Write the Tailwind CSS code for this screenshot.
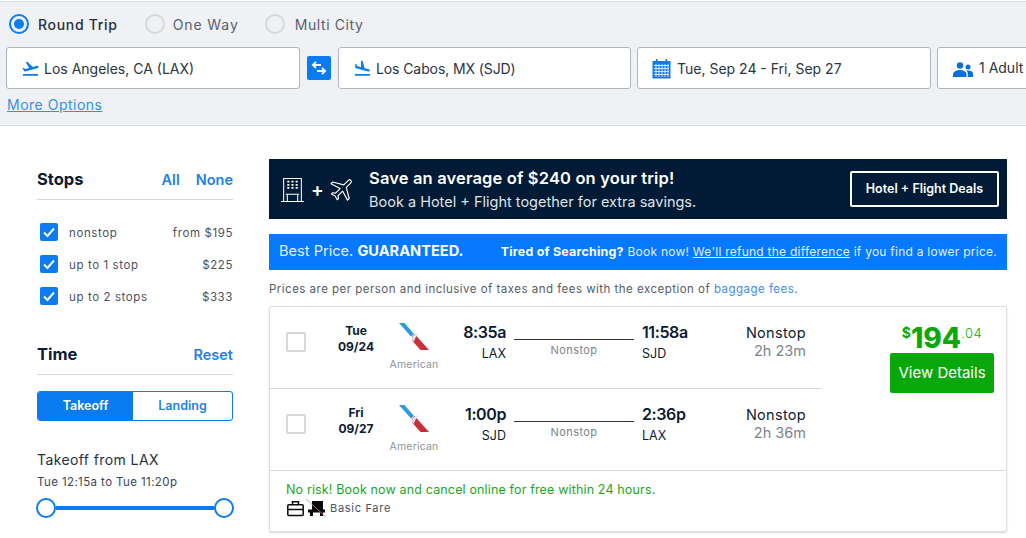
<!DOCTYPE html>
<html lang="en">
<head>
    <meta charset="UTF-8">
    <meta name="viewport" content="width=device-width, initial-scale=1.0">
    <title>Flight results</title>
    <script src="https://cdn.jsdelivr.net/npm/@tailwindcss/browser@4"></script>
</head>
<body class="bg-white font-['Inter',sans-serif] text-[#0b1b33] overflow-hidden h-[538px] w-[1026px]">
    <!-- search bar -->
    <header class="mt-px h-[125px] bg-[#eff1f4] border-y border-[#d9dce0] overflow-hidden">
        <div class="flex items-center h-[44px] pl-[9px] text-[14px]">
            <span class="w-5 h-5 rounded-full border-2 border-[#0a7bf0] flex items-center justify-center"><span class="w-2.5 h-2.5 rounded-full bg-[#0a7bf0]"></span></span>
            <span class="ml-[9px] font-medium text-[#26303f] tracking-[0.7px]">Round Trip</span>
            <span class="ml-[27px] w-5 h-5 rounded-full border-2 border-[#d5d8dc]"></span>
            <span class="ml-2 text-[#59616e] tracking-[0.9px]">One Way</span>
            <span class="ml-[26px] w-5 h-5 rounded-full border-2 border-[#d5d8dc]"></span>
            <span class="ml-[10px] text-[#59616e] tracking-[0.6px]">Multi City</span>
        </div>
        <div class="flex items-center pl-[6px] mt-px text-[14px] text-[#2b3442] whitespace-nowrap">
            <div class="w-[294px] h-[42px] shrink-0 bg-white border border-[#aeb5bd] rounded-[3px] flex items-center pl-[14px]">
                <svg class="w-[19px] h-[19px] text-[#0a7bf0]" viewBox="0 0 24 24" fill="currentColor"><path d="M2.5 19h19v2h-19zm19.57-9.36c-.21-.8-1.04-1.28-1.84-1.06L14.92 10l-6.9-6.43-1.93.51 4.14 7.17-4.97 1.33-1.97-1.54-1.45.39 1.82 3.16.77 1.33 1.6-.43 5.31-1.42 4.35-1.16L21 11.49c.81-.23 1.28-1.05 1.07-1.85z"/></svg>
                <span class="ml-[4px]">Los Angeles, CA (LAX)</span>
            </div>
            <div class="w-6 h-6 shrink-0 mx-[7px] bg-[#0a7bf0] rounded-[2px] flex items-center justify-center">
                <svg class="w-[18px] h-[18px]" viewBox="0 0 18 18" fill="none" stroke="white" stroke-width="1.8"><path d="M3 6h8M6 3 2.8 6 6 9"/><path d="M7 12h8M12 9l3.2 3-3.2 3"/></svg>
            </div>
            <div class="w-[293px] h-[42px] shrink-0 bg-white border border-[#aeb5bd] rounded-[3px] flex items-center pl-[14px]">
                <svg class="w-[19px] h-[19px] text-[#0a7bf0]" viewBox="0 0 24 24" fill="currentColor"><path d="M2.5 19h19v2h-19zm7.18-5.73l4.35 1.16 5.31 1.42c.8.21 1.62-.26 1.84-1.06.21-.8-.26-1.62-1.06-1.84l-5.31-1.42-2.76-9.02L10.12 2v8.28L5.15 8.95l-.93-2.32-1.45-.39v5.17l1.6.43 5.31 1.43z"/></svg>
                <span class="ml-[4px] tracking-[-0.1px]">Los Cabos, MX (SJD)</span>
            </div>
            <div class="w-[294px] h-[42px] shrink-0 ml-[6px] bg-white border border-[#aeb5bd] rounded-[3px] flex items-center pl-[14px]">
                <svg class="w-[19px] h-[21px]" viewBox="0 0 19 21"><rect x="0.5" y="3" width="18" height="17.5" fill="#0a7bf0"/><rect x="4" y="1" width="1.5" height="4" fill="#0a7bf0"/><rect x="13.5" y="1" width="1.5" height="4" fill="#0a7bf0"/><path d="M2 7.5h15M2 10.5h15M2 13.5h15M2 16.5h15M4 6v13M7 6v13M10 6v13M13 6v13M16 6v13" stroke="#cfe3fb" stroke-width="1"/></svg>
                <span class="ml-[6px]">Tue, Sep 24 - Fri, Sep 27</span>
            </div>
            <div class="w-[200px] h-[42px] shrink-0 ml-[6px] bg-white border border-[#aeb5bd] rounded-[3px] flex items-center pl-[15px]">
                <svg class="w-5 h-[15px] mt-[3px] text-[#0a6fdc]" viewBox="0 0 20 15" fill="currentColor"><circle cx="7" cy="3.5" r="3.2"/><path d="M0 15v-2.5C0 9.5 3.5 8 7 8s6.5 1.5 6.5 4.5V15z"/><circle cx="15" cy="5" r="2.5"/><path d="M14.8 15v-3c0-1.4-.5-2.5-1.5-3.4.6-.2 1.2-.2 1.9-.2 2.5 0 4.8 1.2 4.8 3.4V15z"/></svg>
                <span class="ml-[6px] -mt-[2px]">1 Adult</span>
            </div>
        </div>
        <a class="block ml-[7px] mt-[6px] text-[14px] leading-[20px] text-[#3a8ee6] underline tracking-[0.5px]">More Options</a>
    </header>

    <div class="flex items-start">
        <!-- filters -->
        <aside class="w-[196px] ml-[37px] shrink-0">
            <div class="flex items-center justify-between h-[41px] mt-[33px] pt-px border-b border-[#d5d8dc]">
                <h2 class="text-[16.5px] font-bold text-[#0b1b33]">Stops</h2>
                <div class="text-[14.5px] font-semibold text-[#1f80e8] flex gap-4"><span>All</span><span>None</span></div>
            </div>
            <ul class="mt-[18px] text-[11.5px] text-[#4a5260] tracking-[0.6px]">
                <li class="flex items-center h-[32px]">
                    <span class="ml-[3px] -mt-[4px] w-[18px] h-[18px] rounded-[2px] bg-[#0a7bf0] flex items-center justify-center"><svg class="w-3 h-3" viewBox="0 0 12 12" fill="none" stroke="white" stroke-width="2"><path d="M1 6.5 4.5 10 11 2.5"/></svg></span>
                    <span class="ml-[11px]">nonstop</span><span class="ml-auto">from $195</span>
                </li>
                <li class="flex items-center h-[32px]">
                    <span class="ml-[3px] -mt-[4px] w-[18px] h-[18px] rounded-[2px] bg-[#0a7bf0] flex items-center justify-center"><svg class="w-3 h-3" viewBox="0 0 12 12" fill="none" stroke="white" stroke-width="2"><path d="M1 6.5 4.5 10 11 2.5"/></svg></span>
                    <span class="ml-[11px]">up to 1 stop</span><span class="ml-auto">$225</span>
                </li>
                <li class="flex items-center h-[32px]">
                    <span class="ml-[3px] -mt-[4px] w-[18px] h-[18px] rounded-[2px] bg-[#0a7bf0] flex items-center justify-center"><svg class="w-3 h-3" viewBox="0 0 12 12" fill="none" stroke="white" stroke-width="2"><path d="M1 6.5 4.5 10 11 2.5"/></svg></span>
                    <span class="ml-[11px]">up to 2 stops</span><span class="ml-auto">$333</span>
                </li>
            </ul>
            <div class="flex items-center justify-between h-[40px] mt-[21px] border-b border-[#d5d8dc]">
                <h2 class="text-[16.5px] font-bold text-[#0b1b33]">Time</h2>
                <span class="text-[14.5px] font-semibold text-[#1f80e8]">Reset</span>
            </div>
            <div class="flex h-[30px] mt-[16px] border border-[#0a7bf0] rounded-[3px] overflow-hidden text-[12.5px] font-semibold">
                <span class="w-[95px] bg-[#0a7bf0] text-white flex items-center justify-center">Takeoff</span>
                <span class="flex-1 text-[#1f80e8] flex items-center justify-center">Landing</span>
            </div>
            <p class="mt-[29px] text-[14px] leading-[20px] text-[#26303f] tracking-[0.4px]">Takeoff from LAX</p>
            <p class="mt-[4px] text-[11.5px] leading-[16px] text-[#3d4654] tracking-[0.4px]">Tue 12:15a to Tue 11:20p</p>
            <div class="flex items-center mt-[8px] h-5 -ml-px">
                <span class="w-5 h-5 shrink-0 rounded-full bg-white border-2 border-[#0a7bf0]"></span>
                <span class="flex-1 h-[4px] bg-[#0a7bf0]"></span>
                <span class="w-5 h-5 shrink-0 rounded-full bg-white border-2 border-[#0a7bf0] -mr-px"></span>
            </div>
        </aside>

        <!-- results -->
        <main class="w-[738px] ml-[36px] mt-[33px] shrink-0">
            <section class="h-[60px] bg-[#011a35] flex items-center text-white">
                <svg class="ml-[11px] w-[25px] h-[25px]" viewBox="0 0 24 24" fill="none" stroke="white" stroke-width="1"><path d="M3.5 23V1.5h17V23M1 23.5h22M7 23v-6.5h10V23M5.5 16.5h13"/><path d="M7 4.5h2M11 4.5h2M15 4.5h2M7 7.5h2M11 7.5h2M15 7.5h2M7 10.5h2M11 10.5h2M15 10.5h2" stroke-width="1.6"/></svg>
                <span class="ml-[7px] w-[11px] h-[11px] flex items-center justify-center text-[19px] font-semibold leading-none">+</span>
                <svg class="ml-[6px] w-[28px] h-[28px]" viewBox="0 0 24 24" fill="none" stroke="white" stroke-width="1" stroke-linejoin="round"><path transform="rotate(45 12 12)" d="M21.5 16v-2L13 9V3.5c0-.83-.67-1.5-1.5-1.5S10 2.67 10 3.5V9l-8.5 5v2l8.5-2.5V19l-2 1.5V22l3.5-1 3.5 1v-1.5L13 19v-5.5z"/></svg>
                <div class="ml-[12px] mt-[2px] whitespace-nowrap">
                    <p class="text-[16.5px] leading-[20px] font-semibold tracking-[0.15px]">Save an average of $240 on your trip!</p>
                    <p class="mt-[3px] text-[14.5px] leading-[22px] text-[#dfe3e8]">Book a Hotel + Flight together for extra savings.</p>
                </div>
                <a class="ml-auto mr-2 w-[149px] h-[36px] border-2 border-white rounded-[2px] flex items-center justify-center text-[12.5px] font-semibold">Hotel + Flight Deals</a>
            </section>

            <section class="h-[36px] mt-[15px] bg-[#0579ff] text-white flex items-center whitespace-nowrap">
                <span class="ml-[10px] -mt-px text-[14.6px] text-[#e3effd]">Best Price. <b class="font-bold text-white">GUARANTEED.</b></span>
                <span class="ml-auto mr-[10px] text-[12px] text-[#e3effd] tracking-[0.25px]"><b class="text-[12.4px] font-bold text-white">Tired of Searching?</b> Book now! <u>We'll refund the difference</u> if you find a lower price.</span>
            </section>

            <p class="mt-[11px] text-[11.5px] leading-[16px] text-[#565c66] tracking-[0.48px] whitespace-nowrap">Prices are per person and inclusive of taxes and fees with the exception of <a class="text-[#3a8ee6]">baggage fees</a>.</p>

            <article class="h-[226px] mt-[9px] border border-[#dcdee1] shadow-[0_1px_2px_rgba(0,0,0,0.15)] rounded-[2px]">
                <div class="flex h-[164px] border-b border-[#d5d8dc]">
                    <div class="w-[552px] shrink-0">
                        <div class="flex h-[82px] border-b border-[#d5d8dc]">
                            <span class="ml-4 mt-[25px] w-5 h-5 shrink-0 border-2 border-[#d5d8dc] rounded-[2px]"></span>
                            <div class="ml-5 mt-[16px] w-[60px] text-center text-[12px] leading-[16px] font-bold">Tue<br>09/24</div>
                            <div class="mt-[15px] w-[56px] flex flex-col items-center">
                                <svg class="w-[30px] h-[30px]" viewBox="0 0 30 30"><path d="M0 1h5.5L15 12l-3 2.5z" fill="#2e9ad6"/><path d="M15.5 12 30 28h-8.5L13 18.5l.5-4z" fill="#c9303a"/><path d="M20 11c-2.5.3-4.5 1.5-6.5 3.5L13 18l2 2c.5-3.5 2.5-6.5 5-9z" fill="#e2e5e9"/></svg>
                                <span class="mt-[7px] text-[10.5px] leading-[12px] text-[#8d939c] tracking-[0.2px]">American</span>
                            </div>
                            <div class="w-[64px] mt-[15px] text-right">
                                <p class="text-[16px] leading-[20px] font-semibold tracking-[-0.4px]">8:35a</p>
                                <p class="mt-[4px] text-[12.5px] leading-[16px]">LAX</p>
                            </div>
                            <div class="ml-2 w-[120px] mt-[32px]">
                                <div class="h-px bg-[#2b3442]"></div>
                                <p class="mt-[4px] text-center text-[11px] leading-[12px] text-[#7d838c] tracking-[0.4px]">Nonstop</p>
                            </div>
                            <div class="ml-2 w-[80px] mt-[15px]">
                                <p class="text-[16px] leading-[20px] font-semibold tracking-[-0.4px]">11:58a</p>
                                <p class="mt-[4px] text-[12.5px] leading-[16px]">SJD</p>
                            </div>
                            <div class="w-[84px] mt-[17px] text-right">
                                <p class="text-[14.5px] leading-[18px] text-[#0b1b33] tracking-[0.3px]">Nonstop</p>
                                <p class="text-[14.5px] leading-[18px] text-[#7d838c]">2h 23m</p>
                            </div>
                        </div>
                        <div class="flex h-[81px]">
                            <span class="ml-4 mt-[25px] w-5 h-5 shrink-0 border-2 border-[#d5d8dc] rounded-[2px]"></span>
                            <div class="ml-5 mt-[16px] w-[60px] text-center text-[12px] leading-[16px] font-bold">Fri<br>09/27</div>
                            <div class="mt-[15px] w-[56px] flex flex-col items-center">
                                <svg class="w-[30px] h-[30px]" viewBox="0 0 30 30"><path d="M0 1h5.5L15 12l-3 2.5z" fill="#2e9ad6"/><path d="M15.5 12 30 28h-8.5L13 18.5l.5-4z" fill="#c9303a"/><path d="M20 11c-2.5.3-4.5 1.5-6.5 3.5L13 18l2 2c.5-3.5 2.5-6.5 5-9z" fill="#e2e5e9"/></svg>
                                <span class="mt-[7px] text-[10.5px] leading-[12px] text-[#8d939c] tracking-[0.2px]">American</span>
                            </div>
                            <div class="w-[64px] mt-[15px] text-right">
                                <p class="text-[16px] leading-[20px] font-semibold tracking-[-0.4px]">1:00p</p>
                                <p class="mt-[4px] text-[12.5px] leading-[16px]">SJD</p>
                            </div>
                            <div class="ml-2 w-[120px] mt-[32px]">
                                <div class="h-px bg-[#2b3442]"></div>
                                <p class="mt-[4px] text-center text-[11px] leading-[12px] text-[#7d838c] tracking-[0.4px]">Nonstop</p>
                            </div>
                            <div class="ml-2 w-[80px] mt-[15px]">
                                <p class="text-[16px] leading-[20px] font-semibold tracking-[-0.4px]">2:36p</p>
                                <p class="mt-[4px] text-[12.5px] leading-[16px]">LAX</p>
                            </div>
                            <div class="w-[84px] mt-[17px] text-right">
                                <p class="text-[14.5px] leading-[18px] text-[#0b1b33] tracking-[0.3px]">Nonstop</p>
                                <p class="text-[14.5px] leading-[18px] text-[#7d838c]">2h 36m</p>
                            </div>
                        </div>
                    </div>
                    <div class="flex-1 flex flex-col items-end pr-3">
                        <div class="w-[104px] h-[46px] flex justify-center text-[#0aa80a]">
                            <span class="mt-[17px] text-[14px] leading-[18px] font-bold">$</span>
                            <span class="mt-[14px] text-[28px] leading-[34px] font-extrabold">194</span>
                            <span class="mt-[18px] text-[13px] leading-[16px] font-light tracking-[0.5px]">.04</span>
                        </div>
                        <a class="w-[104px] h-[40px] bg-[#09a80a] rounded-[2px] text-white text-[15px] flex items-center justify-center">View Details</a>
                    </div>
                </div>
                <p class="ml-4 mt-[11px] text-[12.5px] leading-[16px] text-[#1ea51e] tracking-[0.15px] whitespace-nowrap">No risk! Book now and cancel online for free within 24 hours.</p>
                <div class="flex items-center ml-[17px] mt-px">
                    <svg class="w-[17px] h-[17px]" viewBox="0 0 17 17" fill="none" stroke="#0b0b0b" stroke-width="1.5"><rect x="0.8" y="4.8" width="15.4" height="10.7" rx="1"/><path d="M5.5 4.5V1.8h6v2.7M1 9.5h15"/></svg>
                    <svg class="ml-[2px] w-[20px] h-[18px]" viewBox="0 0 20 18"><path d="M6 2h11v8.5H6zM2 10.5h17v3H2zM4 13h3v4H4zM14 13h3v4h-3z" fill="#0b0b0b"/><path d="M0 0l20 18" stroke="#c9808a" stroke-width="0.8"/></svg>
                    <span class="ml-[4px] text-[11px] text-[#4a5260] tracking-[0.7px]">Basic Fare</span>
                </div>
            </article>
        </main>
    </div>
</body>
</html>
